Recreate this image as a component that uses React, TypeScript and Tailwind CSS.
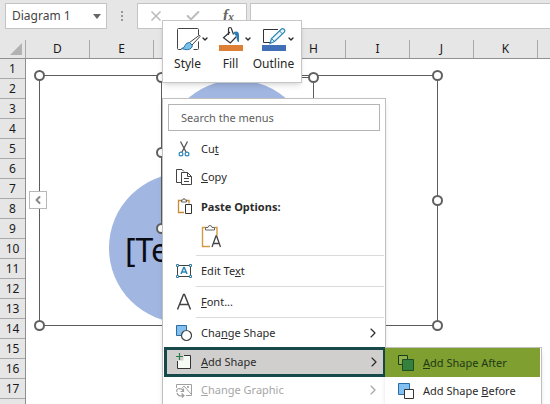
import type { ReactNode } from 'react';
import { Check, ChevronDown, ChevronLeft, ChevronRight, X } from 'lucide-react';

const columns = ['D', 'E', 'F', 'G', 'H', 'I', 'J', 'K'];
const rows = Array.from({ length: 17 }, (_, i) => i + 1);

const handles = [
  [39, 75],
  [437, 75],
  [437, 200],
  [39, 325],
  [437, 325],
  [161, 77],
  [313, 77],
  [161, 152],
  [161, 228],
];

function StyleIcon() {
  return (
    <svg width="26" height="26" viewBox="0 0 26 26" fill="none">
      <path d="M23.500 9V3.500q0-1-1-1h-19q-1 0-1 1v19q0 1 1 1h3M18.500 23.500h4q1 0 1-1v-7" stroke="#444" />
      <path d="M24 9.500L14.500 16.500l2.500 2.500 8-8.500q0-1.500-1-1z" fill="#fff" stroke="#444" />
      <path d="M14.500 16.500q-3.500 0-4.300 2.800T6.500 22.500q7 2.500 9.800-.5 1.500-1.700.8-3z" fill="#7cc0ea" stroke="#2173a8" />
    </svg>
  );
}

function FillIcon() {
  return (
    <svg width="26" height="26" viewBox="0 0 26 26" fill="none">
      <path d="M12 6L5.500 11.700l6.800 5.300 6.200-6.500" fill="#fff" stroke="#333" strokeWidth="1.200" />
      <path d="M10.500 9V3.200q0-1.700 1.500-1.700t1.600 1.700L15.500 8.500" stroke="#333" strokeWidth="1.200" />
      <path d="M15.500 6q5.500-2 5.500 3v7q-2.500 0-2.500-6-1.500 0-3-4z" fill="#2b7eb5" />
      <path d="M1 19h24v6H1z" fill="#dd8036" />
    </svg>
  );
}

function OutlineIcon() {
  return (
    <svg width="26" height="26" viewBox="0 0 26 26" fill="none">
      <path d="M17 3.500H2.500v13h6.500" stroke="#333" />
      <path d="M9 17.500l1.500-5L20.500 3q1.200-1 2.600.3t.4 2.600L13.500 15.500z" fill="#e8f5fb" stroke="#2c86b3" strokeWidth="1.200" />
      <path d="M18.500 5l3 3M10.500 12.500l3 3" stroke="#2c86b3" />
      <path d="M1 19h24v6H1z" fill="#4270b8" />
    </svg>
  );
}

function CutIcon() {
  return (
    <svg width="16" height="18" viewBox="0 0 16 18" fill="none">
      <path d="M4.500 1.500L10 12M11.500 1.500L6 12" stroke="#555" strokeWidth="1.300" />
      <circle cx="5" cy="14" r="1.900" stroke="#2f86b5" strokeWidth="1.200" />
      <circle cx="11" cy="14" r="1.900" stroke="#2f86b5" strokeWidth="1.200" />
    </svg>
  );
}

function CopyIcon() {
  return (
    <svg width="16" height="18" viewBox="0 0 16 18" fill="none" stroke="#444">
      <path d="M5 14.500H.5v-13H6l2 2" />
      <path d="M5.500 4.500h6l4 4v8h-10zM11.500 4.500v4h4M8 10.500h5M8 13.500h5" />
    </svg>
  );
}

function ClipboardIcon() {
  return (
    <svg width="16" height="18" viewBox="0 0 16 18" fill="none">
      <path d="M8 14.500H2.500v-12h3M10 2.500h3v3" stroke="#c98a35" strokeWidth="1.300" />
      <path d="M5.500 4V2H7Q7 .5 8 .5T9 2h1.500v2z" fill="#fff" stroke="#666" />
      <path d="M9.500 6.500h6v9h-6z" fill="#fff" stroke="#333" />
    </svg>
  );
}

function KeepTextIcon() {
  return (
    <svg width="22" height="26" viewBox="0 0 22 26" fill="none">
      <path d="M11 23.500H3.500v-19h4M15 4.500h3v8" stroke="#d39a45" strokeWidth="1.400" />
      <path d="M6.500 7V4.500H9q0-2 2-2t2 2h2.500V7z" fill="#fff" stroke="#666" />
      <path d="M13 24L17 13h.6L21.500 24M14.500 20.500h6" stroke="#444" strokeWidth="1.300" />
    </svg>
  );
}

function EditTextIcon() {
  return (
    <svg width="16" height="18" viewBox="0 0 16 18" fill="none">
      <path d="M1.500 3.500h13v11h-13z" stroke="#444" />
      <path d="M5 12l2.700-6.500h.6L11 12M6 10h4" stroke="#2f86b5" strokeWidth="1.500" />
      <path d="M.5 2.500h2v2h-2zM13.500 2.500h2v2h-2zM.5 13.500h2v2h-2zM13.500 13.500h2v2h-2z" fill="#fff" stroke="#2f7fa8" />
    </svg>
  );
}

function FontIcon() {
  return (
    <svg width="16" height="18" viewBox="0 0 16 18" fill="none">
      <path d="M1.500 16.500L7.500 1.500h1l6 15M3.500 11.500h9" stroke="#444" strokeWidth="1.500" />
    </svg>
  );
}

function ChangeShapeIcon() {
  return (
    <svg width="16" height="18" viewBox="0 0 16 18" fill="none">
      <path d="M.5 1.500h10v10H.5z" fill="#83c0ef" stroke="#2a6da3" />
      <circle cx="10.500" cy="11.500" r="5" fill="#fff" stroke="#444" strokeWidth="1.200" />
    </svg>
  );
}

function AddShapeIcon() {
  return (
    <svg width="16" height="18" viewBox="0 0 16 18" fill="none">
      <path d="M7.500 2.500h7v13h-13v-8h6z" fill="#f5faf5" />
      <path d="M8 2.500h6.500v13h-13V8" stroke="#333" />
      <path d="M3.500 0v7M0 3.500h7" stroke="#2c7a45" strokeWidth="1.200" />
    </svg>
  );
}

function ChangeGraphicIcon() {
  return (
    <svg width="16" height="18" viewBox="0 0 16 18" fill="none" stroke="#a0a0a0">
      <path d="M.5 7V3.500h15v11H10M6 7l2-2 7 8" />
      <path d="M11.500 5.500h1v1h-1z" fill="#a0a0a0" />
      <path d="M1 11q-1-3 2.500-3.500 3 0 4 3M7.500 7.500v3h-3M1 12q1 3 4 3l3-1M5.500 12.500L8 14.500l-2 2" strokeWidth="1.200" />
    </svg>
  );
}

function ShapeAfterIcon() {
  return (
    <svg width="16" height="18" viewBox="0 0 16 18" fill="none">
      <path d="M4 10.500H.5v-9h9V5" fill="#8fb04a" stroke="#173d1c" />
      <path d="M4.500 5.500h11v11h-11z" fill="#35803c" stroke="#1d4f25" />
    </svg>
  );
}

function ShapeBeforeIcon() {
  return (
    <svg width="16" height="18" viewBox="0 0 16 18" fill="none">
      <path d="M.5 1.500h11v11H.5z" fill="#83c0ef" stroke="#2a6da3" />
      <path d="M6.500 7.500h9v9h-9z" fill="#fff" stroke="#333" />
    </svg>
  );
}

type MenuItemProps = {
  icon: ReactNode;
  children: ReactNode;
  arrow?: boolean;
  disabled?: boolean;
};

function MenuItem({ icon, children, arrow, disabled }: MenuItemProps) {
  return (
    <button
      role="menuitem"
      disabled={disabled}
      className="flex h-7 w-full items-center gap-[9px] pr-1 pl-[13px] text-left text-[#2b2b2b] disabled:text-[#a6a6a6]"
    >
      {icon}
      <span className="flex-1">{children}</span>
      {arrow && <ChevronRight className="h-4 w-4" strokeWidth={1.75} />}
    </button>
  );
}

function Separator() {
  return <div role="separator" className="mr-px ml-[33px] h-px bg-[#dadada]" />;
}

function MiniToolbar() {
  const tools = [
    { label: 'Style', icon: <StyleIcon /> },
    { label: 'Fill', icon: <FillIcon /> },
    { label: 'Outline', icon: <OutlineIcon /> },
  ];

  return (
    <div
      role="toolbar"
      className="absolute top-5 left-[162px] flex h-[63px] w-[140px] border border-[#c6c6c6] bg-white pt-[5px] pl-[3px] shadow-md"
    >
      {tools.map((tool) => (
        <button key={tool.label} className="flex w-[43px] flex-col items-center text-[#262626]">
          <span className="-mr-2 flex items-center">
            {tool.icon}
            <ChevronDown className="h-2 w-2" strokeWidth={4} />
          </span>
          <span className="mt-1 leading-4">{tool.label}</span>
        </button>
      ))}
    </div>
  );
}

function ContextMenu() {
  return (
    <div
      role="menu"
      className="absolute top-[98px] left-[162px] w-[224px] border border-[#c0c0c0] bg-white pb-1 text-[11px] shadow-md"
    >
      <div className="px-[5px] pt-[5px] pb-1">
        <input
          aria-label="Search the menus"
          placeholder="Search the menus"
          className="block h-[27px] w-full border border-[#b4b4b4] bg-white px-3 outline-none placeholder:text-[#606060]"
        />
      </div>
      <MenuItem icon={<CutIcon />}>
        Cu<u>t</u>
      </MenuItem>
      <MenuItem icon={<CopyIcon />}>
        <u>C</u>opy
      </MenuItem>
      <div className="flex h-8 items-center gap-[9px] pl-[13px] font-bold text-[#2b2b2b]">
        <ClipboardIcon />
        Paste Options:
      </div>
      <button aria-label="Keep Text Only" className="ml-9 flex h-8 items-start">
        <KeepTextIcon />
      </button>
      <Separator />
      <div className="py-px">
        <MenuItem icon={<EditTextIcon />}>
          Edit Te<u>x</u>t
        </MenuItem>
      </div>
      <Separator />
      <div className="py-px">
        <MenuItem icon={<FontIcon />}>
          <u>F</u>ont...
        </MenuItem>
      </div>
      <Separator />
      <div className="pt-px">
        <MenuItem icon={<ChangeShapeIcon />} arrow>
          Cha<u>n</u>ge Shape
        </MenuItem>
      </div>
      <div className="relative">
        <button
          role="menuitem"
          aria-haspopup="true"
          className="ml-px flex h-[30px] w-[222px] items-center gap-[9px] border-3 border-[#17494b] bg-[#d0cfce] pr-px pl-[9px] text-left text-[#2b2b2b]"
        >
          <AddShapeIcon />
          <span className="flex-1">
            <u>A</u>dd Shape
          </span>
          <ChevronRight className="h-4 w-4" strokeWidth={1.75} />
        </button>
        <SubMenu />
      </div>
      <div className="-mt-px">
        <MenuItem icon={<ChangeGraphicIcon />} arrow disabled>
          <u>C</u>hange Graphic
        </MenuItem>
      </div>
    </div>
  );
}

function SubMenu() {
  return (
    <div role="menu" className="absolute top-0 left-full w-[157px] border border-l-0 border-[#c0c0c0] bg-white pr-px pb-4 shadow-md">
      <button role="menuitem" className="flex h-[29px] w-full items-center gap-[9px] bg-[#809f31] pl-[13px] text-left text-[#1d3a14]">
        <ShapeAfterIcon />
        <span>
          <u>A</u>dd Shape After
        </span>
      </button>
      <button role="menuitem" className="flex h-7 w-full items-center gap-[9px] pl-[13px] text-left text-[#2b2b2b]">
        <ShapeBeforeIcon />
        <span>
          Add Shape <u>B</u>efore
        </span>
      </button>
    </div>
  );
}

function Diagram() {
  return (
    <svg className="absolute top-0 left-0" width="524" height="345" viewBox="26 59 524 345" fill="none">
      <circle cx="237" cy="155" r="75" fill="#a1b6e1" />
      <circle cx="184" cy="248" r="75" fill="#a1b6e1" />
      <text x="125" y="262" fontSize="32" fill="#0b0b14">
        [Text]
      </text>
      <path d="M39.500 75.500h398v250h-398zM161.500 77.500h152v151h-152z" stroke="#5c5c5c" />
      {handles.map(([x, y]) => (
        <circle key={`${x}-${y}`} cx={x + 0.5} cy={y + 0.5} r="4.500" fill="#fff" stroke="#606060" strokeWidth="2" />
      ))}
    </svg>
  );
}

export default function App() {
  return (
    <div className="relative flex h-screen flex-col overflow-hidden bg-white font-['Noto_Sans','Open_Sans',sans-serif] text-[12px] leading-4 text-[#222]">
      <header className="flex h-10 shrink-0 items-start bg-[#e6e6e6] pt-[3px]">
        <button className="ml-[5px] flex h-[26px] w-[102px] items-center justify-between border border-[#c4c4c4] bg-white pr-[5px] pl-[6px] text-[#444]">
          Diagram 1
          <svg width="8" height="5" viewBox="0 0 8 5" fill="#666">
            <path d="M0 0h8L4 5z" />
          </svg>
        </button>
        <svg className="mt-2 ml-[13px]" width="4" height="11" viewBox="0 0 4 11" fill="#999">
          <path d="M1 0h2v2H1zM1 4h2v2H1zM1 8h2v2H1z" />
        </svg>
        <div className="ml-[13px] flex h-[26px] w-[110px] items-center justify-between border border-[#c4c4c4] bg-white pr-3 pl-[10px] text-[#bcbcbc]">
          <button aria-label="Cancel">
            <X className="h-4 w-4" strokeWidth={2.5} />
          </button>
          <button aria-label="Enter">
            <Check className="h-4 w-4" strokeWidth={3} />
          </button>
          <button aria-label="Insert function" className="font-['Liberation_Serif',serif] text-[16px] font-bold text-[#666] italic">
            f<span className="text-[12px]">x</span>
          </button>
        </div>
        <input aria-label="Formula bar" className="ml-[3px] h-[26px] min-w-0 flex-1 border border-r-0 border-[#c4c4c4] bg-white outline-none" />
      </header>

      <div className="flex h-[19px] shrink-0 border-b border-[#8f8f8f] bg-[#e6e6e6]">
        <div className="flex w-[26px] shrink-0 items-end justify-end border-r border-[#a8a8a8] pr-[3px] pb-[3px]">
          <svg width="12" height="12" viewBox="0 0 12 12" fill="#b2b2b2">
            <path d="M12 0v12H0z" />
          </svg>
        </div>
        {columns.map((column) => (
          <div key={column} className="w-16 shrink-0 border-r border-[#a8a8a8] text-center leading-[18px] text-[#1a1a1a]">
            {column}
          </div>
        ))}
      </div>

      <div className="flex min-h-0 flex-1">
        <div className="w-[26px] shrink-0 border-r border-[#8f8f8f] bg-[#e6e6e6]">
          {rows.map((row) => (
            <div key={row} className="h-5 border-b border-[#a8a8a8] text-center leading-5 text-[#1a1a1a]">
              {row}
            </div>
          ))}
        </div>
        <main className="relative flex-1 overflow-hidden">
          <Diagram />
          <button
            aria-label="Expand text pane"
            className="absolute top-[132px] left-[3px] flex h-[18px] w-[18px] items-center justify-center border border-[#b8b8b8] bg-white text-[#888]"
          >
            <ChevronLeft className="h-3 w-3" strokeWidth={4} />
          </button>
        </main>
      </div>

      <ContextMenu />
      <MiniToolbar />
    </div>
  );
}
